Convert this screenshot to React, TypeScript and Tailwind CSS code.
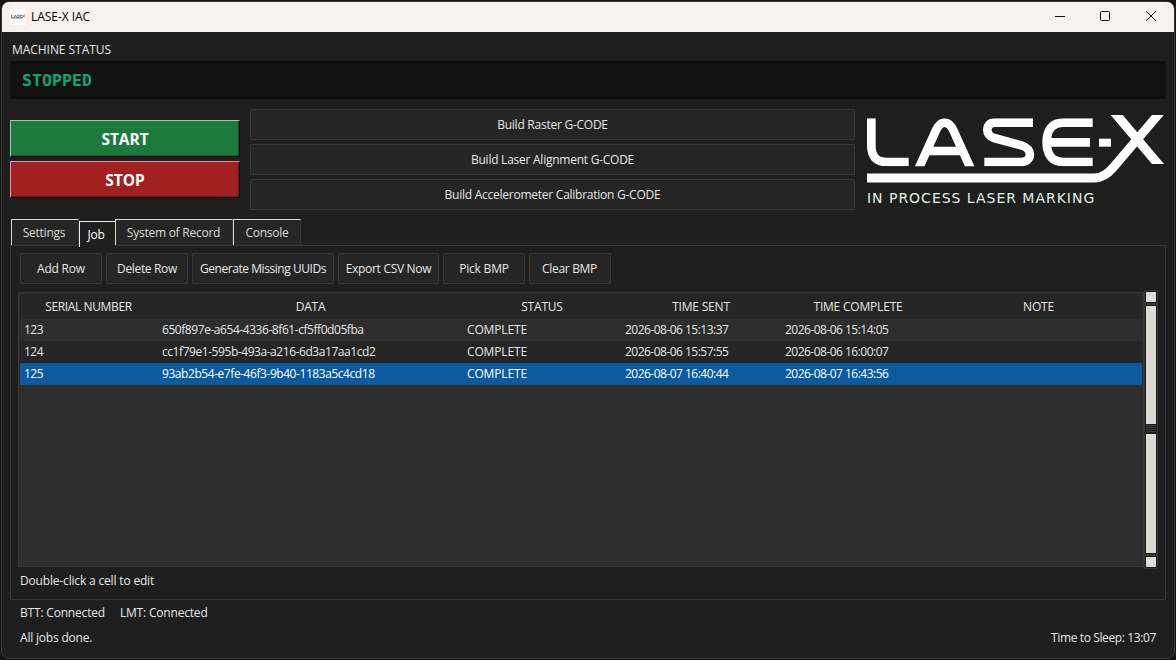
import clsx from "clsx";

type Job = { serial: string; data: string; status: string; sent: string; complete: string; note: string };

const jobs: Job[] = [
  { serial: "123", data: "650f897e-a654-4336-8f61-cf5ff0d05fba", status: "COMPLETE", sent: "2026-08-06 15:13:37", complete: "2026-08-06 15:14:05", note: "" },
  { serial: "124", data: "cc1f79e1-595b-493a-a216-6d3a17aa1cd2", status: "COMPLETE", sent: "2026-08-06 15:57:55", complete: "2026-08-06 16:00:07", note: "" },
  { serial: "125", data: "93ab2b54-e7fe-46f3-9b40-1183a5c4cd18", status: "COMPLETE", sent: "2026-08-07 16:40:44", complete: "2026-08-07 16:43:56", note: "" },
];

const columns = ["SERIAL NUMBER", "DATA", "STATUS", "TIME SENT", "TIME COMPLETE", "NOTE"];
const builders = ["Build Raster G-CODE", "Build Laser Alignment G-CODE", "Build Accelerometer Calibration G-CODE"];

const tools = [
  { label: "Add Row", style: "w-[82px]" },
  { label: "Delete Row", style: "w-[82px] tracking-[-0.35px]" },
  { label: "Generate Missing UUIDs", style: "w-[142px] tracking-[-0.45px]" },
  { label: "Export CSV Now", style: "w-[101px] tracking-[-0.3px]" },
  { label: "Pick BMP", style: "w-[82px]" },
  { label: "Clear BMP", style: "w-[82px] pr-px tracking-[-0.3px]" },
];

const rowGrid = "grid grid-cols-[138px_305px_158px_160px_154px_207px]";

function TitleBar() {
  return (
    <div className="flex h-[30px] shrink-0 items-center rounded-t-[7px] bg-[#f9f1ee] pl-2 text-black">
      <div className="flex h-4 w-4 items-center justify-center bg-white">
        <svg width="16" height="6" viewBox="0 0 16 6" fill="none" stroke="#777" strokeWidth="1">
          <path d="M1.5 1v2.5h2M4 4l1.300-3L7 4M9.500 1.500h-2l1.500 2h-2M12 1.500h-2v2h2M12.500 1l2.500 2.500M15 .5l-3 3.500H1.500" />
        </svg>
      </div>
      <span className="ml-[5px] text-[12px] tracking-[-0.05px]">LASE-X IAC</span>
      <svg className="ml-auto" width="120" height="30" viewBox="0 0 120 30" fill="none" stroke="#111">
        <path d="M1 14.500h10" />
        <rect x="46.500" y="9.500" width="9" height="9" rx="1" />
        <path d="M92 9l10 10M102 9l-10 10" />
      </svg>
    </div>
  );
}

function Logo() {
  return (
    <div className="ml-3 w-[299px] pt-1.5">
      <svg width="298" height="68" viewBox="21 30 894 204" fill="none" stroke="#fff" strokeWidth="26">
        <clipPath id="letters"><path d="M21 40h700v144h-700z" /></clipPath>
        <g clipPath="url(#letters)">
          <path d="M34 40V122Q34 171 80 171H146" />
          <path d="M174 195L226 80Q238 53 254 53Q270 53 282 80L334 195M200 138H308" />
          <path d="M519 53H404C376 53 374 91 402 99L484 121C520 131 517 171 482 171H373" />
          <path d="M698 53H612Q560 53 560 112Q560 171 612 171H698M560 112H690" />
        </g>
        <path d="M717 113H753" strokeWidth="24" />
        <path d="M752 30H788L912 177H876Z" fill="#fff" stroke="none" />
        <path d="M909 12L760 187Q733 219 703 219H21" strokeWidth="27" />
      </svg>
      <p className="mt-[7px] font-['DejaVu_Sans'] text-[14px] leading-4 tracking-[0.98px] whitespace-nowrap text-[#e2f0e2]">
        IN PROCESS LASER MARKING
      </p>
    </div>
  );
}

function FlatButton({ label, className = "tracking-[-0.25px]" }: { label: string; className?: string }) {
  return (
    <button className={clsx("flex h-[31px] shrink-0 items-center justify-center rounded-[1px] border border-[#373737] bg-[#252525] whitespace-nowrap", className)}>
      {label}
    </button>
  );
}

function Tabs() {
  const idle = "flex h-[27px] items-center justify-center border-t border-l border-t-[#d8d8d4] border-l-[#d8d8d4] bg-[#252525]";
  return (
    <div className="ml-px flex h-[27px] tracking-[-0.25px] text-[#dcdad5]">
      <div className={clsx(idle, "w-[68px] border-r border-r-[#373737] pr-0.5")}>Settings</div>
      <div className="z-10 mt-0.5 flex h-[26px] w-9 items-center justify-center border-t border-l border-[#eee] bg-[#1e1e1e] pr-[3px] text-white">Job</div>
      <div className={clsx(idle, "w-[118px] border-r border-r-[#373737] pr-px")}>System of Record</div>
      <div className={clsx(idle, "w-[68px] border-r border-r-[#373737]")}>Console</div>
    </div>
  );
}

function JobTable() {
  return (
    <div className="mt-0.5 flex h-[275px] w-[1126px] flex-col border border-[#373737] bg-[#2d2d2d] p-px pr-0">
      <div className={clsx(rowGrid, "h-[25px] w-[1122px] items-center bg-[#252525] text-center tracking-[-0.2px]")}>
        {columns.map((c, i) => <div key={c} className={clsx(i === 0 && "pr-px tracking-[-0.38px]")}>{c}</div>)}
      </div>
      {jobs.map((job, i) => (
        <div key={job.serial}
          className={clsx(rowGrid, "h-[22px] w-[1122px] items-center *:pl-1", i === 0 && "bg-[#2d2d2d]", i === 1 && "bg-[#252525]", i === 2 && "bg-[#0b5a9d] text-white")}>
          <div className="tracking-[-0.5px]">{job.serial}</div>
          <div className="tracking-[-0.44px]">{job.data}</div>
          <div className="tracking-[-0.15px]">{job.status}</div>
          <div className="tracking-[-0.52px]">{job.sent}</div>
          <div className="tracking-[-0.52px]">{job.complete}</div>
          <div>{job.note}</div>
        </div>
      ))}
    </div>
  );
}

function ScrollBar() {
  return (
    <div className="flex h-[279px] w-3.5 flex-col items-center border border-[#373737] bg-[#373737]">
      <div className="flex h-3 w-3 shrink-0 items-center justify-center border border-[#1a1a1a] bg-[#dcdad5]">
        <svg width="8" height="5"><path d="M0 5l4-5 4 5z" fill="#e2e2e0" /></svg>
      </div>
      <div className="mt-0.5 flex h-[249px] w-3 flex-col border border-[#1a1a1a] bg-[#dcdad5]">
        <div className="mt-[118px] flex h-2.5 shrink-0 flex-col gap-px bg-[#1e1e1e] pt-px">
          {[0, 1, 2, 3].map(n => <div key={n} className="h-px bg-[#3a3a3a]" />)}
        </div>
      </div>
      <div className="mt-0.5 flex h-3 w-3 shrink-0 items-center justify-center border border-[#1a1a1a] bg-[#dcdad5]">
        <svg width="8" height="5"><path d="M0 0l4 5 4-5z" fill="#e2e2e0" /></svg>
      </div>
    </div>
  );
}

export default function App() {
  return (
    <div className="h-[660px] w-[1176px] overflow-hidden bg-[#171415] pt-px pl-px font-['Open_Sans',sans-serif] text-[12px] leading-4 tracking-[-0.2px] text-[#e6e6e6]">
      <div className="flex h-[658px] w-[1174px] flex-col rounded-lg border border-[#3a3a3a] bg-[#1e1e1e]">
        <TitleBar />
        <div className="flex flex-col px-2 pt-2.5">
          <div className="ml-0.5 h-[19px] tracking-[-0.05px]">MACHINE STATUS</div>
          <div className="flex h-[38px] w-[1156px] items-center bg-[#111] pt-0.5 pl-3 font-['DejaVu_Sans_Mono'] text-[16.600px] font-bold tracking-normal text-[#0ba874]">
            STOPPED
          </div>

          <div className="flex h-[120px] pt-2.5">
            <div className="flex w-[230px] flex-col gap-1 pt-[11px] text-[15.500px] font-bold tracking-[-0.05px] text-white">
              <button className="h-[37px] border border-t-[#9ccbab] border-r-black border-b-black border-l-[#9ccbab] bg-[#1b7a3c] shadow-[inset_-1px_-1px_#125229]">START</button>
              <button className="h-[37px] border border-t-[#dc9c9c] border-r-black border-b-black border-l-[#dc9c9c] bg-[#a32020] shadow-[inset_-1px_-1px_#6d1515]">STOP</button>
            </div>
            <div className="ml-2.5 flex w-[605px] flex-col gap-1">
              {builders.map(label => <FlatButton key={label} label={label} />)}
            </div>
            <Logo />
          </div>

          <Tabs />
          <div className="-mt-px flex h-[355px] w-[1156px] flex-col border border-[#373737] pt-[7px] pl-[7px]">
            <div className="ml-0.5 flex gap-1">
              {tools.map(t => <FlatButton key={t.label} label={t.label} className={t.style} />)}
            </div>
            <div className="mt-1.5 flex">
              <JobTable />
              <ScrollBar />
            </div>
            <div className="mt-1 ml-0.5 tracking-[-0.17px]">Double-click a cell to edit</div>
          </div>

          <div className="mt-[5px] ml-2.5 flex gap-[15px] tracking-[-0.19px]">
            <span>BTT: Connected</span>
            <span>LMT: Connected</span>
          </div>
          <div className="mt-[9px] mr-2.5 ml-2.5 flex justify-between">
            <span>All jobs done.</span>
            <span className="tracking-[-0.38px]">Time to Sleep: 13:07</span>
          </div>
        </div>
      </div>
    </div>
  );
}
